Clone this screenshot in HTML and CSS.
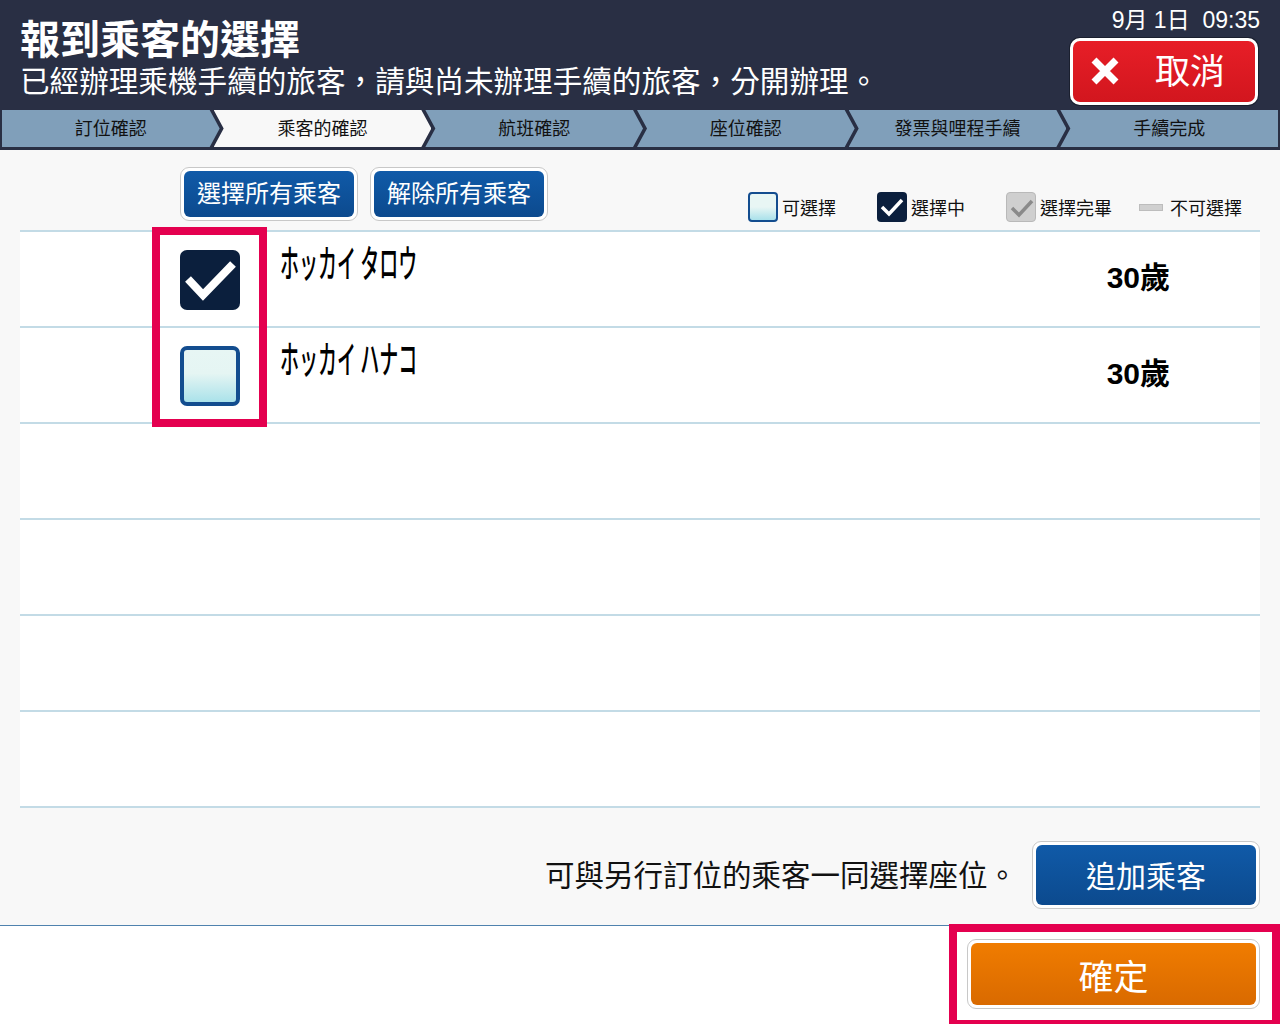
FILE: index.html
```html
<!DOCTYPE html>
<html lang="zh-Hant">
<head>
<meta charset="utf-8">
<title>報到乘客的選擇</title>
<link rel="stylesheet" href="styles.css">
</head>
<body>
<div class="screen">
  <header class="top">
    <div class="titles">
      <h1 class="title">報到乘客的選擇</h1>
      <p class="subtitle">已經辦理乘機手續的旅客<span class="punct">，</span>請與尚未辦理手續的旅客<span class="punct">，</span>分開辦理<span class="punct">。</span></p>
    </div>
    <div class="top-right">
      <div class="clock">9月 1日&nbsp; 09:35</div>
      <button class="cancel">
        <svg class="cancel-x" width="30" height="30" viewBox="0 0 30 30"><path d="M4 4 L26 26 M26 4 L4 26" stroke="#fff" stroke-width="7" stroke-linecap="butt"/></svg>
        <span>取消</span>
      </button>
    </div>
  </header>

  <nav class="steps">
    <div class="step first">訂位確認</div>
    <div class="step active">乘客的確認</div>
    <div class="step">航班確認</div>
    <div class="step">座位確認</div>
    <div class="step">發票與哩程手續</div>
    <div class="step last">手續完成</div>
  </nav>

  <main class="content">
    <div class="toolbar">
      <div class="btn-frame"><button class="btn-blue btn-sm">選擇所有乘客</button></div>
      <div class="btn-frame"><button class="btn-blue btn-sm">解除所有乘客</button></div>
      <div class="legend">
        <div class="legend-item"><span class="lg-box lg-empty"></span><span>可選擇</span></div>
        <div class="legend-item"><span class="lg-box lg-checked"><svg width="30" height="30" viewBox="0 0 30 30"><path d="M5 15 L12 22 L25 8" fill="none" stroke="#fff" stroke-width="3.5"/></svg></span><span>選擇中</span></div>
        <div class="legend-item"><span class="lg-box lg-done"><svg width="30" height="30" viewBox="0 0 30 30"><path d="M5 15 L12 22 L25 8" fill="none" stroke="#8a8a8a" stroke-width="3.5"/></svg></span><span>選擇完畢</span></div>
        <div class="legend-item lg-last"><span class="lg-bar"></span><span>不可選擇</span></div>
      </div>
    </div>

    <div class="table">
      <div class="row">
        <span class="check checked"><svg width="60" height="60" viewBox="0 0 60 60"><path d="M8 29 L23 45 L53 14" fill="none" stroke="#fff" stroke-width="8"/></svg></span>
        <div class="name"><span class="kana">ホッカイ タロウ</span></div>
        <div class="age">30歲</div>
      </div>
      <div class="row">
        <span class="check unchecked"></span>
        <div class="name"><span class="kana">ホッカイ ハナコ</span></div>
        <div class="age">30歲</div>
      </div>
      <div class="row"></div>
      <div class="row"></div>
      <div class="row"></div>
      <div class="row"></div>
      <div class="highlight hl-rows"></div>
    </div>

    <div class="addrow">
      <span class="addtext">可與另行訂位的乘客一同選擇座位<span class="punct">。</span></span>
      <div class="btn-frame"><button class="btn-blue btn-lg">追加乘客</button></div>
    </div>
  </main>

  <footer class="footer">
    <div class="btn-frame"><button class="btn-orange">確定</button></div>
    <div class="highlight hl-confirm"></div>
  </footer>
</div>
</body>
</html>
```

FILE: styles.css
```css
* { box-sizing: border-box; }
html, body { margin: 0; padding: 0; }
body {
  width: 1280px;
  height: 1024px;
  overflow: hidden;
  background: #ffffff;
  font-family: "Liberation Sans", "Noto Sans CJK TC", sans-serif;
  color: #111;
}
.screen { width: 1280px; height: 1024px; display: flex; flex-direction: column; }

button { font-family: inherit; border: none; cursor: pointer; padding: 0; margin: 0; }

.punct { font-family: "Noto Sans CJK JP", sans-serif; }

/* header */
.top {
  height: 110px;
  background: #292f44;
  display: flex;
  justify-content: space-between;
  padding: 0 20px 0 20px;
  color: #fff;
}
.titles { padding-top: 15px; }
.title {
  margin: 0;
  font-size: 40px;
  line-height: 44px;
  font-weight: bold;
  font-family: "Noto Sans CJK TC", sans-serif;
}
.subtitle {
  margin: 0;
  font-size: 29.6px;
  line-height: 42px;
  font-family: "Noto Sans CJK TC", sans-serif;
}
.top-right { display: flex; flex-direction: column; align-items: flex-end; padding-top: 6px; }
.clock { font-size: 23px; line-height: 28px; color: #fff; }
.cancel {
  margin-top: 4px;
  margin-right: 2px;
  width: 188px;
  height: 67px;
  border: 3px solid #fff;
  border-radius: 10px;
  background: linear-gradient(#e71e27, #d2161e);
  box-shadow: 0 0 0 1px #1a1f2e;
  color: #fff;
  display: flex;
  align-items: center;
  padding-left: 17px;
  gap: 35px;
  font-size: 35px;
  font-family: "Noto Sans CJK TC", sans-serif;
}
.cancel span { line-height: 1; margin-top: -6px; }
.cancel-x { margin-top: -2px; }

/* steps */
.steps {
  display: flex;
  height: 40px;
  background: #292f44;
  padding: 0 2px 3px 2px;
}
.step {
  flex: 1;
  height: 37px;
  background: #809fba;
  color: #111;
  font-size: 18px;
  font-family: "Noto Sans CJK TC", sans-serif;
  display: flex;
  align-items: center;
  justify-content: center;
  padding-bottom: 3px;
  margin-left: -6px;
  clip-path: polygon(0 0, calc(100% - 10px) 0, 100% 50%, calc(100% - 10px) 100%, 0 100%, 10px 50%);
}
.step.first {
  margin-left: 0;
  clip-path: polygon(0 0, calc(100% - 10px) 0, 100% 50%, calc(100% - 10px) 100%, 0 100%);
}
.step.last {
  clip-path: polygon(0 0, 100% 0, 100% 100%, 0 100%, 10px 50%);
}
.step.active { background: #f8f8f8; }

/* content */
.content {
  background: #f8f8f8;
  padding: 0 20px 16px 20px;
  border-bottom: 1px solid #4f82ae;
}
.toolbar {
  height: 80px;
  display: flex;
  align-items: flex-end;
  padding: 0 18px 9px 160px;
  gap: 12px;
}
.btn-frame {
  border: 1px solid #c8c8c8;
  border-radius: 9px;
  background: #fff;
  padding: 3px;
}
.btn-blue {
  background: linear-gradient(#105aa8, #0c4a8e);
  color: #fff;
  border-radius: 6px;
  font-family: "Noto Sans CJK TC", sans-serif;
  display: flex;
  align-items: center;
  justify-content: center;
}
.btn-sm { width: 170px; height: 46px; font-size: 24px; padding-bottom: 6px; }
.btn-lg { width: 220px; height: 60px; font-size: 30px; padding-bottom: 3px; }

.legend {
  margin-left: auto;
  display: flex;
  align-items: center;
  font-size: 18px;
  font-family: "Noto Sans CJK TC", sans-serif;
  margin-bottom: -1px;
}
.legend-item { display: flex; align-items: center; gap: 4px; margin-right: 41px; }
.legend-item.lg-last { margin-right: 0; gap: 7px; }
.legend-item:nth-child(3) { margin-right: 27px; }
.lg-box {
  width: 30px; height: 30px;
  border-radius: 4px;
  display: block;
}
.lg-box svg { display: block; }
.lg-empty { border: 2px solid #134d8f; background: linear-gradient(#e8f6f4 50%, #a9e1ea); }
.lg-checked { background: #0b1f3d; }
.lg-done { background: #cfcfcf; border: 1px solid #b9b9b9; }
.lg-bar { width: 24px; height: 7px; background: #d0d0d0; border: 1px solid #bdbdbd; display: block; }

/* table */
.table {
  position: relative;
  background: #fff;
  border-top: 2px solid #c3dbe6;
}
.row {
  height: 96px;
  border-bottom: 2px solid #c3dbe6;
  display: flex;
  align-items: flex-start;
  padding: 18px 90px 0 160px;
}
.check {
  width: 60px;
  height: 60px;
  border-radius: 7px;
  display: block;
  flex: none;
}
.check svg { display: block; }
.check.checked { background: #0b1f3d; }
.check.unchecked {
  border: 4px solid #134d8f;
  background: linear-gradient(#e7f6f4 0%, #e5f5f3 45%, #aae2ea 100%);
}
.name { flex: 1; padding-left: 40px; margin-top: -12px; }
.kana {
  display: inline-block;
  font-family: "Noto Sans CJK JP", sans-serif;
  font-size: 38px;
  font-weight: 500;
  line-height: 46px;
  transform: scaleX(0.5);
  transform-origin: left center;
  white-space: nowrap;
  color: #000;
}
.age {
  font-size: 30px;
  font-weight: bold;
  line-height: 40px;
  margin-top: 8px;
  color: #000;
  font-family: "Liberation Sans", "Noto Sans CJK TC", sans-serif;
}

.highlight {
  position: absolute;
  border: 8px solid #e4004f;
  pointer-events: none;
}
.hl-rows { left: 132px; top: -5px; width: 115px; height: 200px; }

/* add row */
.addrow {
  margin-top: 33px;
  display: flex;
  justify-content: flex-end;
  align-items: center;
  gap: 15px;
}
.addtext {
  font-size: 29.5px;
  font-family: "Noto Sans CJK TC", sans-serif;
  color: #111;
  margin-top: -4px;
}

/* footer */
.footer {
  position: relative;
  flex: 1;
  background: #fff;
  display: flex;
  justify-content: flex-end;
  align-items: flex-start;
  padding: 13px 20px 0 0;
}
.btn-orange {
  width: 285px;
  height: 62px;
  border-radius: 6px;
  background: linear-gradient(#f07c00, #d96a00);
  color: #fff;
  font-size: 35px;
  font-family: "Noto Sans CJK TC", sans-serif;
  display: flex;
  align-items: center;
  justify-content: center;
}
.hl-confirm { left: 949px; top: -2px; width: 331px; height: 104px; }
```
